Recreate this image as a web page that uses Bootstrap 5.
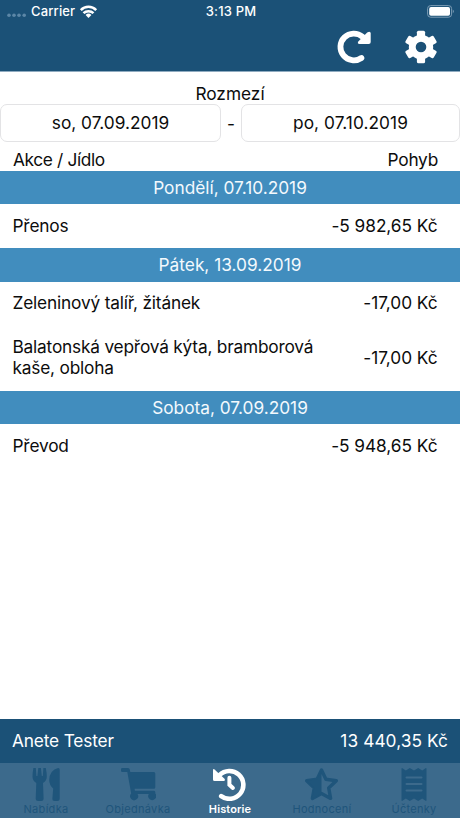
<!DOCTYPE html>
<html lang="cs">
<head>
<meta charset="utf-8">
<meta name="viewport" content="width=device-width, initial-scale=1">
<title>Historie</title>
<link rel="stylesheet" href="https://cdn.jsdelivr.net/npm/bootstrap@5.3.0/dist/css/bootstrap.min.css">
<style>
body{font-family:Inter,"Noto Sans",sans-serif;font-size:17.3px;line-height:21px;color:#0c0c0c;background:#fff;height:818px;overflow:hidden}
svg{display:block;flex:none}
.app-head{background:#1b5177;height:71px;box-shadow:0 1px #8fabc0}
.status{height:23px;font-size:13px;line-height:23px;font-weight:500;letter-spacing:.15px;padding-left:7px;padding-right:5px}
.status>*{flex:1 1 0}
.tools{height:48px;padding-right:23px;gap:34px}
.range-title{height:33px;padding-top:11.5px}
.date-field{height:38px;border:1px solid #e3e3e5;border-radius:7px;padding-bottom:2px}
.date-a{width:221px}.date-b{width:219px;letter-spacing:.06px}
.heads{height:28.5px;padding:7px 22px 0 13px}
.heads span:first-child{letter-spacing:-.36px}
.heads span:last-child{letter-spacing:-.25px}
.band{background:#418dbe;color:#f3f9fd;height:33.5px;padding-bottom:.5px}
.entry{height:44px;padding:10px 22.500px 12px 12.500px;letter-spacing:-.18px}
.entry-two{height:65px}
.entry span:last-child{letter-spacing:-.05px}
.entry .entry-name:first-child{width:310px;letter-spacing:-.2px}
.account{background:#1b5177;height:44px;padding:0 12px 1px}
.account span:first-child{letter-spacing:-.16px}
.account span:last-child{letter-spacing:.08px}
.tabs{background:#3c6a8c;height:55px;padding-top:5px;color:#1f557b}
.tab-item{flex:1 1 0;font-size:11px;line-height:13px;letter-spacing:.3px}
.tab-item svg{margin-bottom:2px}
.tab-on{color:#fff;font-weight:600;letter-spacing:.1px}
</style>
<script src="https://cdn.jsdelivr.net/npm/bootstrap@5.3.0/dist/js/bootstrap.bundle.min.js"></script>
</head>
<body class="d-flex flex-column">
<header class="app-head text-white flex-shrink-0">
  <div class="status d-flex align-items-center">
    <div class="d-flex align-items-center">
      <svg width="20" height="12" viewBox="0 0 20 12" fill="#5c87a7"><circle cx="2" cy="9.300" r="1.800"/><circle cx="7" cy="9.300" r="1.800"/><circle cx="12" cy="9.300" r="1.800"/><circle cx="17.200" cy="9.300" r="1.800"/></svg>
      <span class="ms-1">Carrier</span>
      <svg class="ms-1" width="19" height="13" viewBox="0 0 19 13"><g fill="none" stroke="#fff" stroke-width="2.500"><path d="M1.800 5.100a10.800 10.800 0 0 1 15.400 0"/><path d="M4.500 8.200a7.100 7.100 0 0 1 10 0"/></g><path fill="#fff" d="M6.600 10a4.200 4.200 0 0 1 5.800 0L9.500 12.900z"/></svg>
    </div>
    <div class="text-center">3:13 PM</div>
    <div class="d-flex justify-content-end">
      <svg width="28" height="13" viewBox="0 0 28 13"><rect x=".6" y=".6" width="24" height="11.600" rx="3" fill="none" stroke="#7d9db5"/><rect x="2.200" y="2.100" width="20.800" height="8.600" rx="1.800" fill="#fff"/><path d="M25.800 4.600q2.200 1.800 0 3.600z" fill="#7d9db5"/></svg>
    </div>
  </div>
  <div class="tools d-flex justify-content-end align-items-center">
    <svg width="34" height="34" viewBox="0 0 34 34"><path fill="none" stroke="#fff" stroke-width="5.800" stroke-linecap="round" d="M25.500 6.700A13.400 13.400 0 1 0 24.400 28"/><path fill="#fff" d="M30.200 2.400Q33.700.8 33.700 3.500V12q0 2-2 2h-9.200q-2.600-.6-1.200-2.600z"/></svg>
    <svg width="32" height="34" viewBox="0 0 32 34"><g fill="#fff"><circle cx="16" cy="17" r="12.200"/><rect x="11.900" y=".7" width="8.200" height="32.600" rx="1.600"/><rect x="11.900" y=".7" width="8.200" height="32.600" rx="1.600" transform="rotate(60 16 17)"/><rect x="11.900" y=".7" width="8.200" height="32.600" rx="1.600" transform="rotate(-60 16 17)"/></g><circle cx="16" cy="17" r="5.300" fill="#1b5177"/></svg>
  </div>
</header>
<main class="flex-grow-1">
  <div class="range-title text-center">Rozmezí</div>
  <div class="d-flex justify-content-between align-items-center">
    <div class="date-field date-a d-flex align-items-center justify-content-center">so, 07.09.2019</div>
    <span>-</span>
    <div class="date-field date-b d-flex align-items-center justify-content-center">po, 07.10.2019</div>
  </div>
  <div class="heads d-flex justify-content-between"><span>Akce / Jídlo</span><span>Pohyb</span></div>
  <div class="band d-flex align-items-center justify-content-center">Pondělí, 07.10.2019</div>
  <div class="entry d-flex justify-content-between align-items-center"><span>Přenos</span><span class="text-nowrap">-5 982,65 Kč</span></div>
  <div class="band d-flex align-items-center justify-content-center">Pátek, 13.09.2019</div>
  <div class="entry d-flex justify-content-between align-items-center"><span>Zeleninový talíř, žitánek</span><span class="text-nowrap">-17,00 Kč</span></div>
  <div class="entry entry-two d-flex justify-content-between align-items-center"><span class="entry-name">Balatonská vepřová kýta, bramborová kaše, obloha</span><span class="text-nowrap">-17,00 Kč</span></div>
  <div class="band d-flex align-items-center justify-content-center">Sobota, 07.09.2019</div>
  <div class="entry d-flex justify-content-between align-items-center"><span>Převod</span><span class="text-nowrap">-5 948,65 Kč</span></div>
</main>
<footer class="flex-shrink-0">
  <div class="account d-flex justify-content-between align-items-center text-white"><span>Anete Tester</span><span>13 440,35 Kč</span></div>
  <nav class="tabs d-flex">
    <div class="tab-item d-flex flex-column align-items-center">
      <svg width="34" height="33" viewBox="0 0 34 33" fill="currentColor"><path d="M4.400 0h2.400l.6 8h1L9.300 0h2.600l.9 8h1l.6-8h2.400q1 5 1 8.500 0 4-3.800 6.500l.6 15.500q0 2.500-2.500 2.500H9.200q-2.500 0-2.500-2.500L7.300 15Q3.500 12.500 3.500 8.500q0-3.500.9-8.500zM30.700 1.500v29q0 2.500-2.500 2.500h-2.500q-2.500 0-2.300-2.500l.8-10Q20.200 17 20.200 12 20.700 2 29.200 0q1.500 0 1.500 1.500z"/></svg>
      <span>Nabídka</span></div>
    <div class="tab-item d-flex flex-column align-items-center">
      <svg width="36" height="33" viewBox="0 0 36 33" fill="currentColor"><path d="M2.200 0H8q1.500 0 1.800 1.500L10.300 4h23.500q1.500 0 1.500 1.500v13.700q0 1.500-1.500 1.500H14.600l.3 2H34q1.300 0 1.300 1.500v1.300A4 4 0 1 1 28.800 26H17.500A4 4 0 1 1 11.200 25.500L7.300 4H2.200Q1 4 1 2.800V1.200Q1 0 2.200 0z"/></svg>
      <span>Objednávka</span></div>
    <div class="tab-item tab-on d-flex flex-column align-items-center">
      <svg width="34" height="33" viewBox="0 0 34 33"><path fill="none" stroke="#fff" stroke-width="4.600" stroke-linecap="round" d="M6.500 7.200A13.900 13.900 0 1 1 8.200 28.100"/><path d="M16.400 9.800v7l3.500 3.200" fill="none" stroke="#fff" stroke-width="4" stroke-linecap="round"/><path fill="#fff" d="M0 2.200Q0 .3 1.500 1.500l10 9.300q1.200 1.700-.8 2.200H1.500Q0 13 0 11.500z"/></svg>
      <span>Historie</span></div>
    <div class="tab-item d-flex flex-column align-items-center">
      <svg width="34" height="33" viewBox="0 0 34 33"><path fill="none" stroke="currentColor" stroke-width="3.400" stroke-linejoin="round" d="M16.500 2l4.400 9.300 10.400 1.400-7.600 7.200 1.900 10.500-9.100-4.900-9.100 4.900 1.900-10.500-7.600-7.200 10.400-1.400z"/><path fill="currentColor" d="M16.500 2v23.500l-9.100 4.900 1.900-10.500-7.600-7.200 10.400-1.400z"/></svg>
      <span>Hodnocení</span></div>
    <div class="tab-item d-flex flex-column align-items-center">
      <svg width="26" height="33" viewBox="0 0 26 33"><path fill="currentColor" d="M.5 1Q.5-.4 1.800.4L4.800 2.500 8.800 0 13 2.500 17.200 0l4 2.500L24.200.4q1.300-.8 1.300.6v31q0 1.400-1.300.6l-3-2.100-4 2.500-4.200-2.500L8.800 33l-4-2.500-3 2.100Q.5 33.400.5 32z"/><path stroke="#3c6a8c" stroke-width="2" stroke-linecap="round" d="M5.500 9.500h15M5.500 16h15M5.500 22.500h15"/></svg>
      <span>Účtenky</span></div>
  </nav>
</footer>
</body>
</html>
